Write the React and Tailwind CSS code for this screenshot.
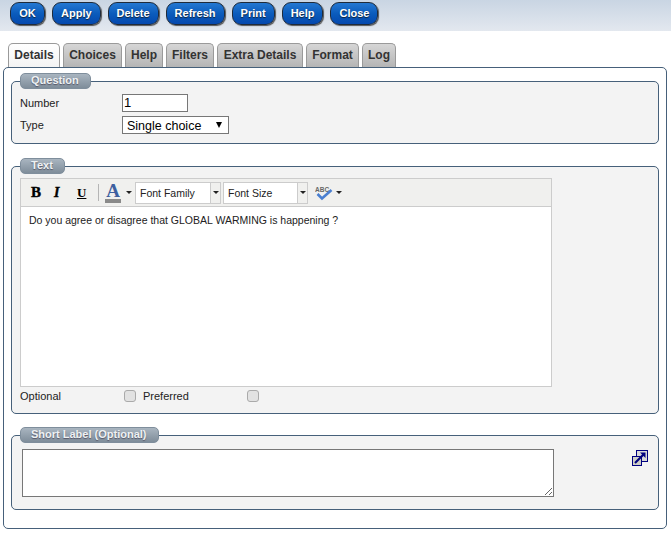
const buttons = ["OK", "Apply", "Delete", "Refresh", "Print", "Help", "Close"]
const tabs = [
  { label: "Details", width: "w-[52px]" },
  { label: "Choices", width: "w-[59px]" },
  { label: "Help", width: "w-[38px]" },
  { label: "Filters", width: "w-[48px]" },
  { label: "Extra Details", width: "w-[86px]" },
  { label: "Format", width: "w-[53px]" },
  { label: "Log", width: "w-[34px]" },
]

function ActionButton({ label }) {
  return (
    <button className="h-[23px] min-w-[35px] px-[8px] rounded-[9px] border border-[#1f2b3a] bg-gradient-to-b from-[#2478d2] via-[#0b5cbc] to-[#0548ae] text-white text-[11px] font-bold leading-none shadow-[1px_1px_1px_#555] [text-shadow:0_1px_1px_#123]">
      {label}
    </button>
  )
}

function Legend({ children }) {
  return (
    <legend className="ml-[8px] h-[16px] pl-[10px] pr-[11px] rounded-[5px] border border-[#7f8e9c] bg-gradient-to-b from-[#a9b5c0] to-[#7f8d9a] text-[#eef1f3] text-[11px] font-bold leading-[13px] [text-shadow:0_1px_1px_#556]">
      {children}
    </legend>
  )
}

function Caret({ className = "" }) {
  return <span className={`border-x-[3px] border-t-[3px] border-x-transparent border-t-[#222] ${className}`} />
}

function ToolbarSelect({ label, width }) {
  return (
    <div className={`${width} h-[22px] flex bg-white border border-[#ccc]`}>
      <span className="flex-1 pl-[4px] text-[10.5px] leading-[20px] text-[#222]">{label}</span>
      <span className="w-[10px] flex items-center justify-center bg-[#f0f0ee] border-l border-[#ccc]">
        <Caret />
      </span>
    </div>
  )
}

function EditorToolbar() {
  return (
    <div className="h-[28px] flex items-center bg-[#f0f0ee] border-b border-[#ccc] pl-[10px]">
      <span className="w-[23px] font-['Liberation_Serif',serif] text-[15px] font-bold text-black [-webkit-text-stroke:0.4px_black]">B</span>
      <span className="w-[23px] font-['Liberation_Serif',serif] text-[14px] font-bold italic text-black [-webkit-text-stroke:0.4px_black]">I</span>
      <span className="w-[21px] font-['Liberation_Serif',serif] text-[13px] font-bold underline text-black">U</span>
      <span className="w-px h-[17px] bg-[#b5b5b5] mr-[6px]" />
      <span className="relative w-[16px] h-[20px] text-center font-['Liberation_Serif',serif] text-[19px] font-bold leading-[16px] text-[#3d5f9f]">
        A
        <span className="absolute left-0 bottom-0 w-[16px] h-[4px] bg-[#8a8a8a]" />
      </span>
      <Caret className="ml-[5px] mr-[3px]" />
      <ToolbarSelect label="Font Family" width="w-[86px]" />
      <div className="w-[2px]" />
      <ToolbarSelect label="Font Size" width="w-[85px]" />
      <svg width="18" height="18" viewBox="0 0 18 18" className="ml-[7px]">
        <text x="0" y="7.5" fontSize="6.5" fontWeight="700" fontFamily="Liberation Sans" fill="#666">ABC</text>
        <path d="M2.5 10 L7 14.5 L16.5 6" fill="none" stroke="#4a7fd0" strokeWidth="2.6" />
      </svg>
      <Caret className="ml-[3px]" />
    </div>
  )
}

function PopupIcon() {
  return (
    <svg width="16" height="16" viewBox="0 0 16 16" className="block">
      <rect x="4.5" y="0.5" width="11" height="11" fill="#d8d8d8" stroke="#00007f" />
      <rect x="0.5" y="6.5" width="9" height="9" fill="#cfcfc6" stroke="#00007f" />
      <path d="M3 13 L12 4" stroke="#00007f" strokeWidth="2.2" />
      <path d="M8 2.5 H13.5 V8 Z" fill="#00007f" />
    </svg>
  )
}

export default function App() {
  return (
    <div className="w-[671px] h-[534px] bg-white overflow-hidden font-['Liberation_Sans',Arial,sans-serif] text-[11px] text-[#222]">
      <div className="h-[31px] flex items-start gap-[7px] pl-[10px] pt-[2px] bg-gradient-to-b from-[#c9d5e3] to-[#e3e8ef]">
        {buttons.map((b) => (
          <ActionButton key={b} label={b} />
        ))}
      </div>

      <div className="mt-[12px] ml-[8px] flex gap-[3px] h-[24px]">
        {tabs.map((t, i) => (
          <div
            key={t.label}
            className={`${t.width} text-center rounded-t-[5px] border border-b-0 border-[#9a9a9a] text-[12px] font-bold leading-[23px] text-[#333] ${
              i === 0 ? "bg-gradient-to-b from-white to-[#f3f3f3]" : "bg-gradient-to-b from-[#d6d6d6] to-[#b5b5b5]"
            }`}
          >
            {t.label}
          </div>
        ))}
      </div>

      <div className="ml-[3px] w-[664px] h-[462px] rounded-[5px] border border-[#46607a] bg-white px-[7px] pt-[5px]">
        <fieldset className="h-[71px] rounded-[5px] border border-[#46607a] bg-[#f3f3f3]">
          <Legend>Question</Legend>
          <div className="ml-[8px] mt-[5px] grid grid-cols-[102px_auto] justify-start items-center gap-y-[4px]">
            <span>Number</span>
            <input defaultValue="1" className="w-[66px] h-[18px] border border-[#777] bg-white px-[1px] text-[13px] text-black" />
            <span>Type</span>
            <div className="relative w-[107px] h-[18px]">
              <select className="appearance-none w-full h-full border border-[#777] bg-white pl-[4px] text-[12.5px] text-black">
                <option>Single choice</option>
              </select>
              <span className="absolute right-[7px] top-[6px] border-x-[3.5px] border-t-[6px] border-x-transparent border-t-black" />
            </div>
          </div>
        </fieldset>

        <fieldset className="mt-[14px] h-[256px] rounded-[5px] border border-[#46607a] bg-[#f3f3f3]">
          <Legend>Text</Legend>
          <div className="ml-[8px] mt-[4px] w-[532px] h-[209px] border border-[#ccc] bg-white">
            <EditorToolbar />
            <p className="pl-[8px] pt-[7px] text-[10.5px] leading-[13px]">Do you agree or disagree that GLOBAL WARMING is happening ?</p>
          </div>
          <div className="ml-[8px] mt-[2px] flex items-center h-[14px]">
            <span className="w-[104px]">Optional</span>
            <input type="checkbox" className="appearance-none w-[12px] h-[12px] rounded-[3px] border border-[#aaa] bg-[#e2e2e2]" />
            <span className="ml-[7px] w-[104px]">Preferred</span>
            <input type="checkbox" className="appearance-none w-[12px] h-[12px] rounded-[3px] border border-[#aaa] bg-[#e2e2e2]" />
          </div>
        </fieldset>

        <fieldset className="mt-[13px] h-[83px] rounded-[5px] border border-[#46607a] bg-[#f3f3f3]">
          <Legend>Short Label (Optional)</Legend>
          <div className="flex items-start mt-[6px] ml-[10px]">
            <textarea className="w-[532px] h-[48px] border border-[#777] bg-white" />
            <span className="ml-[78px] mt-px"><PopupIcon /></span>
          </div>
        </fieldset>
      </div>
    </div>
  )
}
